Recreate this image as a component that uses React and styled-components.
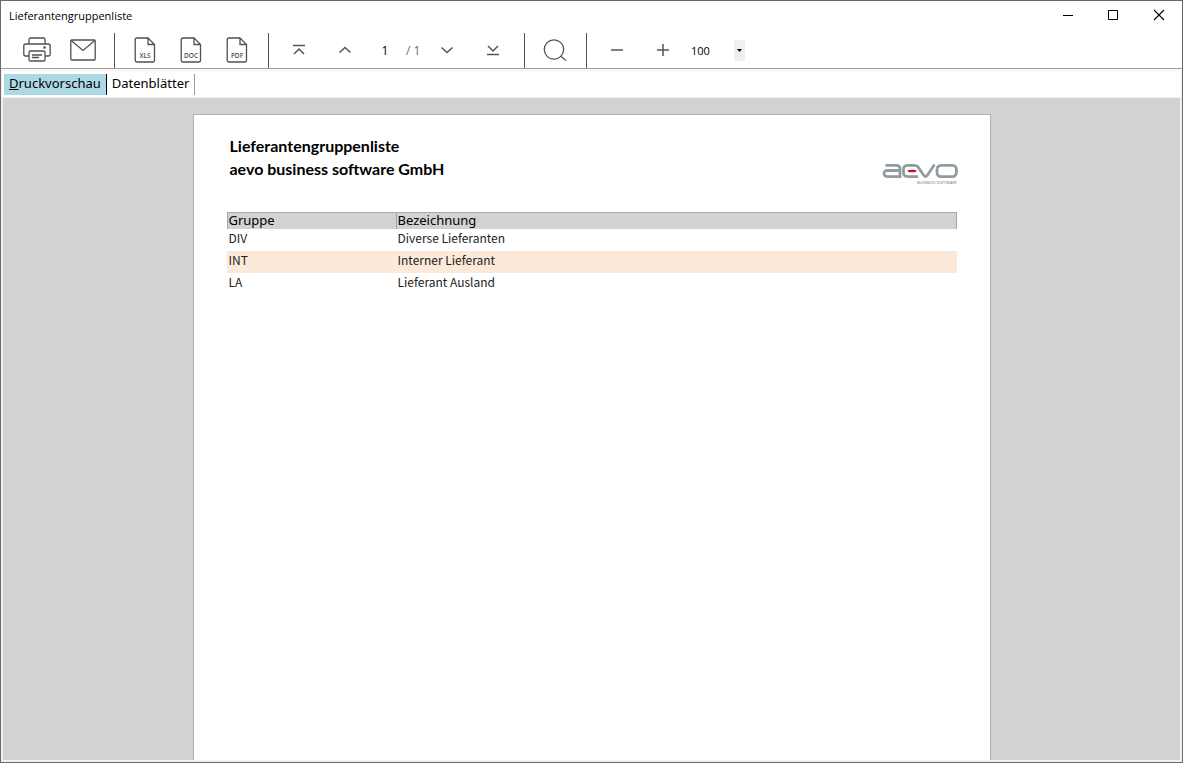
import { useState } from 'react';
import styled, { createGlobalStyle } from 'styled-components';

const GlobalStyle = createGlobalStyle`
  * {
    box-sizing: border-box;
  }

  body {
    margin: 0;
    font-family: 'Noto Sans', sans-serif;
    color: #000;
  }

  button, input, select {
    font: inherit;
    color: inherit;
  }
`;

const Window = styled.div`
  display: flex;
  flex-direction: column;
  height: 100vh;
  border: 1px solid #6b6969;
  background: #fff;
`;

const TitleBar = styled.header`
  display: flex;
  justify-content: space-between;
  height: 30px;
`;

const Title = styled.h1`
  margin: 0;
  padding-left: 8px;
  font-family: 'Open Sans', sans-serif;
  font-size: 11px;
  font-weight: 400;
  line-height: 30px;
`;

const WindowButtons = styled.div`
  display: flex;
  padding-bottom: 2px;
`;

const IconButton = styled.button`
  display: flex;
  align-items: center;
  justify-content: center;
  width: 46px;
  height: 100%;
  padding: 0;
  border: 0;
  background: transparent;
`;

const Toolbar = styled.div`
  display: flex;
  height: 38px;
  padding: 2px 0 0 6px;
  border-bottom: 1px solid #999;
`;

const Group = styled.div`
  display: flex;
  align-items: center;
  padding: 0 8px 1px 7px;
  border-right: ${(props) => (props.$last ? '0' : '1px solid #555')};
`;

const Pager = styled.div`
  display: flex;
  align-items: center;
  width: 56px;
  font-family: 'Open Sans', sans-serif;
  font-size: 12px;
`;

const PageInput = styled.input`
  width: 34px;
  padding: 0;
  border: 0;
  background: transparent;
  text-align: center;
`;

const PageCount = styled.span`
  padding-left: 4px;
  color: #4f7f5a;
  white-space: nowrap;
`;

const ZoomBox = styled.div`
  display: grid;
  align-items: center;
  width: 59px;
  height: 21px;
  font-family: 'Open Sans', sans-serif;
  font-size: 11px;
`;

const ZoomSelect = styled.select`
  grid-area: 1 / 1;
  width: 100%;
  height: 21px;
  padding: 0 0 0 5px;
  border: 0;
  background: transparent;
  appearance: none;
`;

const ZoomArrow = styled.span`
  display: flex;
  align-items: center;
  justify-content: center;
  grid-area: 1 / 1;
  justify-self: end;
  width: 11px;
  height: 21px;
  background: #f0f0f0;
  pointer-events: none;
`;

const Content = styled.div`
  display: flex;
  flex: 1;
  flex-direction: column;
  min-height: 0;
  margin-top: 1px;
  border: 1px solid #f0f0f0;
  border-bottom-width: 2px;
`;

const Tabs = styled.div`
  display: flex;
  height: 27px;
  padding: 3px 2px 2px;
  border-bottom: 1px solid #f0f0f0;
`;

const Tab = styled.button`
  height: 21px;
  padding: 0 5px 3px;
  border: 0;
  border-right: 1px solid ${(props) => (props.$active ? '#000' : '#999')};
  background: ${(props) => (props.$active ? '#add8e6' : 'transparent')};
  font-size: 13px;
  line-height: 18px;
`;

const Preview = styled.main`
  display: flex;
  flex: 1;
  justify-content: center;
  min-height: 0;
  padding: 16px 16px 0;
  border: solid #f0f0f0;
  border-width: 0 1px;
  background: #d2d2d2;
`;

const Sheet = styled.article`
  width: 100%;
  max-width: 798px;
  padding: 19px 33px 0;
  border: 1px solid #b0b0b0;
  border-bottom: 0;
  background: #fff;
`;

const SheetHead = styled.div`
  display: flex;
  justify-content: space-between;
  padding-left: 3px;
`;

const Heading = styled.h2`
  margin: 0;
  font-family: Lato, sans-serif;
  font-size: 16px;
  font-weight: 700;
  line-height: 23px;
`;

const Logo = styled.svg`
  width: 78px;
  height: 24px;
  margin: 28px -2px 0 0;
`;

const Table = styled.table`
  width: 100%;
  margin-top: 26px;
  border-collapse: separate;
  border-spacing: 0;
  table-layout: fixed;
  text-align: left;
`;

const HeadCell = styled.th`
  width: ${(props) => props.$width || 'auto'};
  height: 17px;
  padding: 0 1px 1px;
  border: solid #a6a6a6;
  border-width: 1px 0 0 1px;
  background: #d2d2d2;
  font-size: 13px;
  font-weight: 400;
  line-height: 15px;

  &:last-child {
    border-right-width: 1px;
  }
`;

const Row = styled.tr`
  background: ${(props) => (props.$shaded ? '#fde9d9' : '#fff')};
`;

const Cell = styled.td`
  height: 22px;
  padding: 0 2px 5px;
  color: #222;
  font-family: 'Noto Sans CJK SC', sans-serif;
  font-size: 12px;
  line-height: 17px;
`;

const files = ['XLS', 'DOC', 'PDF'];

const rows = [
  { code: 'DIV', name: 'Diverse Lieferanten' },
  { code: 'INT', name: 'Interner Lieferant' },
  { code: 'LA', name: 'Lieferant Ausland' },
];

const PrinterIcon = () => (
  <svg width="28" height="26" viewBox="0 0 28 26" fill="none" stroke="#505050" strokeWidth="1.3">
    <path d="M6 7V2.5Q6 1 7.500 1h13Q22 1 22 2.500V7" />
    <path d="M6 19H2.500Q.8 19 .8 17.300V9Q.8 7 2.800 7h22.400Q27.200 7 27.200 9v8.300Q27.200 19 25.500 19H22" />
    <rect x="6" y="14" width="16" height="10" rx="1.2" />
    <path d="M9 18h10M9 20.500h7" />
    <circle cx="21.500" cy="10.500" r=".7" fill="#505050" />
  </svg>
);

const MailIcon = () => (
  <svg width="26" height="22" viewBox="0 0 26 22" fill="none" stroke="#505050" strokeWidth="1.3">
    <rect x=".8" y="1" width="24.400" height="20" rx="1" />
    <path d="M1.200 1.500L13 11.500 24.800 1.500" />
  </svg>
);

const FileIcon = ({ label }) => (
  <svg width="22" height="26" viewBox="0 0 22 26" fill="none" stroke="#505050" strokeWidth="1.3">
    <path d="M14 1H3Q1.200 1 1.200 2.800v20.400Q1.200 25 3 25h16Q20.500 25 20.500 23.200V7.500L14 1V7.500h6.500" />
    <text x="11" y="21" textAnchor="middle" fontFamily="Open Sans, sans-serif" fontSize="6.500" fontWeight="600" fill="#505050" stroke="none">
      {label}
    </text>
  </svg>
);

const Glyph = ({ d, width = 1.5, color = '#555' }) => (
  <svg width="14" height="14" viewBox="0 0 14 14" fill="none" stroke={color} strokeWidth={width}>
    <path d={d} />
  </svg>
);

const SearchIcon = () => (
  <svg width="24" height="24" viewBox="0 0 24 24" fill="none" stroke="#555" strokeWidth="1.3">
    <circle cx="11" cy="11.500" r="9.700" />
    <path d="M17.500 18l5.500 4.500" />
  </svg>
);

const AevoLogo = () => (
  <Logo viewBox="0 0 78 24" role="img" aria-label="aevo business software">
    <g fill="none" stroke="#919ca1" strokeWidth="2.800">
      <path d="M4.500 3.400H15Q19 3.400 19 7V14.600H6.500Q3 14.600 3 11.500T6.500 8.500H18" />
      <path d="M37 14.600H27.500Q22.500 14.600 22.500 11V7Q22.500 3.400 27.500 3.400H32Q36.500 3.400 37.500 5.500L42.500 13Q44.500 16 46.500 13L53.500 2.500" />
      <rect x="56" y="3.400" width="19.400" height="11.200" rx="4" />
    </g>
    <ellipse cx="31" cy="9" rx="4.500" ry="1.300" fill="#c8102e" />
    <text x="76" y="22" textAnchor="end" fontFamily="Open Sans, sans-serif" fontSize="4" fill="#777">
      BUSINESS SOFTWARE
    </text>
  </Logo>
);

export default function App() {
  const [tab, setTab] = useState('preview');
  const [page, setPage] = useState('1');
  const [zoom, setZoom] = useState('100');

  return (
    <Window>
      <GlobalStyle />
      <TitleBar>
        <Title>Lieferantengruppenliste</Title>
        <WindowButtons>
          <IconButton aria-label="Minimieren">
            <Glyph d="M3 7.500h10" width={1} color="#000" />
          </IconButton>
          <IconButton aria-label="Maximieren">
            <Glyph d="M2.500 2.500h9v9h-9z" width={1} color="#000" />
          </IconButton>
          <IconButton aria-label="Schließen">
            <Glyph d="M2 2l10 10M12 2l-10 10" width={1.1} color="#000" />
          </IconButton>
        </WindowButtons>
      </TitleBar>

      <Toolbar>
        <Group>
          <IconButton aria-label="Drucken"><PrinterIcon /></IconButton>
          <IconButton aria-label="E-Mail"><MailIcon /></IconButton>
        </Group>
        <Group>
          {files.map((file) => (
            <IconButton key={file} aria-label={file}><FileIcon label={file} /></IconButton>
          ))}
        </Group>
        <Group>
          <IconButton aria-label="Erste Seite" onClick={() => setPage('1')}>
            <Glyph d="M1 2.500h12M2 11l5-5 5 5" />
          </IconButton>
          <IconButton aria-label="Vorherige Seite">
            <Glyph d="M1.500 9.500L7 4.500l5.500 5" />
          </IconButton>
          <Pager>
            <PageInput aria-label="Seite" value={page} onChange={(e) => setPage(e.target.value)} />
            <PageCount>/ 1</PageCount>
          </Pager>
          <IconButton aria-label="Nächste Seite">
            <Glyph d="M1.500 4.500L7 9.500l5.500-5" />
          </IconButton>
          <IconButton aria-label="Letzte Seite" onClick={() => setPage('1')}>
            <Glyph d="M1 11.500h12M2 3l5 5 5-5" />
          </IconButton>
        </Group>
        <Group>
          <IconButton aria-label="Suchen"><SearchIcon /></IconButton>
        </Group>
        <Group $last>
          <IconButton aria-label="Verkleinern">
            <Glyph d="M1 7h12" />
          </IconButton>
          <IconButton aria-label="Vergrößern">
            <Glyph d="M1 7h12M7 1v12" />
          </IconButton>
          <ZoomBox>
            <ZoomSelect aria-label="Zoom" value={zoom} onChange={(e) => setZoom(e.target.value)}>
              <option>50</option>
              <option>100</option>
              <option>200</option>
            </ZoomSelect>
            <ZoomArrow>
              <svg width="5" height="3" viewBox="0 0 5 3"><path d="M0 0h5L2.500 3z" /></svg>
            </ZoomArrow>
          </ZoomBox>
        </Group>
      </Toolbar>

      <Content>
        <Tabs role="tablist">
          <Tab role="tab" $active={tab === 'preview'} onClick={() => setTab('preview')}>
            <u>D</u>ruckvorschau
          </Tab>
          <Tab role="tab" $active={tab === 'sheets'} onClick={() => setTab('sheets')}>
            Datenblätter
          </Tab>
        </Tabs>
        <Preview>
          <Sheet>
            <SheetHead>
              <div>
                <Heading>Lieferantengruppenliste</Heading>
                <Heading>aevo business software GmbH</Heading>
              </div>
              <AevoLogo />
            </SheetHead>
            <Table>
              <thead>
                <tr>
                  <HeadCell $width="169px">Gruppe</HeadCell>
                  <HeadCell>Bezeichnung</HeadCell>
                </tr>
              </thead>
              <tbody>
                {rows.map((row, i) => (
                  <Row key={row.code} $shaded={i % 2 === 1}>
                    <Cell>{row.code}</Cell>
                    <Cell>{row.name}</Cell>
                  </Row>
                ))}
              </tbody>
            </Table>
          </Sheet>
        </Preview>
      </Content>
    </Window>
  );
}
